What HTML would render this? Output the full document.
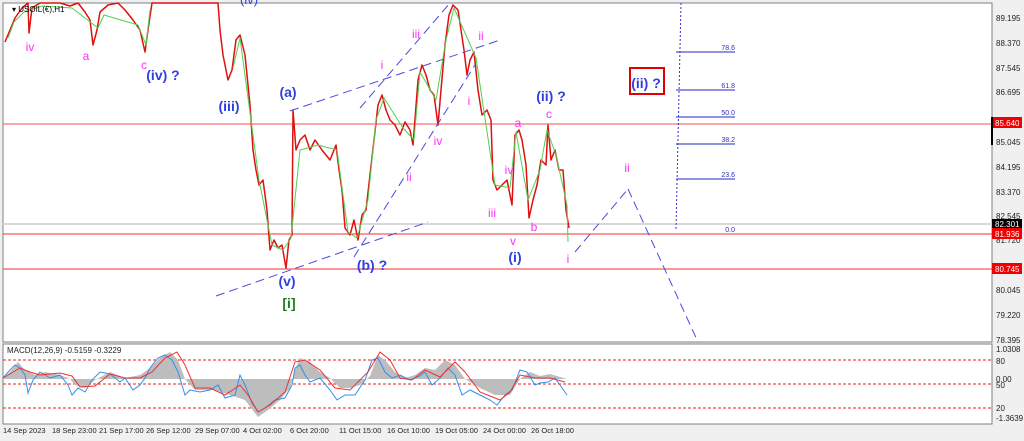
<!DOCTYPE html>
<html><head><meta charset="utf-8"><style>
body{margin:0;background:#f0f0f0;width:1024px;height:441px;overflow:hidden;font-family:"Liberation Sans",sans-serif}
svg{display:block}
</style></head><body>
<svg width="1024" height="441" viewBox="0 0 1024 441" xmlns="http://www.w3.org/2000/svg" font-family="Liberation Sans, sans-serif">
<rect x="0" y="0" width="1024" height="441" fill="#f0f0f0"/>
<rect x="3" y="3" width="989" height="339" fill="#fff" stroke="#808080"/>
<rect x="3" y="344" width="989" height="80" fill="#fff" stroke="#808080"/>
<line x1="3" y1="224" x2="992" y2="224" stroke="#d8d8d8" stroke-width="2"/>
<line x1="3" y1="124" x2="992" y2="124" stroke="#f25050" stroke-width="1"/>
<line x1="3" y1="234" x2="992" y2="234" stroke="#f03030" stroke-width="1"/>
<line x1="3" y1="269" x2="992" y2="269" stroke="#f03030" stroke-width="1"/>
<g fill="none" stroke-linejoin="round">
<polyline stroke="#e01010" stroke-width="1.5" points="5,42 10,30 15,18 22,8 28,3 29,33 32,8 40,3 60,3 70,6 78,3 85,12 90,20 93,45 97,30 100,12 108,5 118,3 125,10 133,20 140,30 145,52 148,30 152,3 218,3 220,30 223,55 228,80 232,70 236,40 240,35 245,55 250,105 253,150 256,170 259,185 263,180 267,210 270,250 274,240 278,248 282,245 286,268 289,240 292,235 293,110 296,150 300,140 305,135 310,150 315,140 322,150 330,160 336,145 339,170 342,190 345,228 350,235 354,220 358,240 362,215 366,210 370,175 374,140 378,105 382,95 386,110 390,120 395,125 400,135 405,122 410,130 413,145 418,80 422,65 426,75 430,90 434,95 438,125 441,90 445,45 449,15 453,5 458,10 461,30 464,50 467,75 470,60 474,52 478,90 482,115 487,110 491,120 493,180 497,190 502,185 507,180 512,205 515,135 519,130 522,140 526,165 529,218 533,200 537,185 541,160 546,165 548,125 551,160 555,150 559,170 563,170 566,210 569,228"/>
<polyline stroke="#50d050" stroke-width="1" points="8,38 14,22 24,12 42,6 72,8 98,28 104,15 138,25 146,45 150,10"/>
<polyline stroke="#50d050" stroke-width="1" points="233,68 240,38 259,180 272,245 283,250 291,238 300,150 318,145 337,150 348,232 357,238 368,200 376,120 384,98 403,128 414,140 420,72 436,100 446,40 454,8 476,58 495,185 510,188 516,132 528,200 540,170 547,130 556,155 567,205 568,242"/>
</g>
<g stroke="#4a4ae0" stroke-width="1" stroke-dasharray="9,5" fill="none">
<line x1="216" y1="296" x2="428" y2="222"/>
<line x1="290" y1="111" x2="500" y2="40"/>
<line x1="354" y1="257" x2="475" y2="65"/>
<line x1="360" y1="108" x2="450" y2="3"/>
<line x1="575" y1="252" x2="628" y2="189"/>
<line x1="628" y1="189" x2="698" y2="342"/>
</g>
<line x1="681" y1="3" x2="676" y2="229" stroke="#3030d0" stroke-dasharray="2,2"/>
<g stroke="#5050d0" stroke-width="1.2">
<line x1="676" y1="52" x2="735" y2="52"/><line x1="676" y1="90" x2="735" y2="90"/>
<line x1="676" y1="117" x2="735" y2="117"/><line x1="676" y1="144" x2="735" y2="144"/>
<line x1="676" y1="179" x2="735" y2="179"/>
</g>
<g font-size="7" fill="#3030b0" text-anchor="end">
<text x="735" y="50">78.6</text><text x="735" y="88">61.8</text><text x="735" y="115">50.0</text>
<text x="735" y="142">38.2</text><text x="735" y="177">23.6</text><text x="735" y="232">0.0</text>
</g>
<g font-size="12" fill="#ff30ff" text-anchor="middle">
<text x="30" y="51">iv</text><text x="86" y="60">a</text><text x="144" y="69">c</text>
<text x="382" y="69">i</text><text x="416" y="38">iii</text><text x="481" y="40">ii</text>
<text x="469" y="105">i</text><text x="438" y="145">iv</text><text x="409" y="181">ii</text>
<text x="509" y="174">iv</text><text x="492" y="217">iii</text><text x="513" y="245">v</text>
<text x="518" y="127">a</text><text x="534" y="231">b</text><text x="549" y="118">c</text>
<text x="568" y="263">i</text><text x="627" y="172">ii</text>
</g>
<g font-size="14" fill="#3040e0" text-anchor="middle" font-weight="bold">
<text x="163" y="80">(iv) ?</text><text x="229" y="111">(iii)</text><text x="288" y="97">(a)</text>
<text x="287" y="286">(v)</text><text x="372" y="270">(b) ?</text><text x="515" y="262">(i)</text>
<text x="551" y="101">(ii) ?</text><text x="646" y="88">(ii) ?</text>
</g>
<rect x="630" y="68" width="34" height="26" fill="none" stroke="#e00000" stroke-width="2"/>
<text x="289" y="308" font-size="14" fill="#208020" text-anchor="middle" font-weight="bold">[i]</text>
<text x="240" y="4" font-size="13" fill="#3040e0">(iv)</text>
<text x="12" y="12" font-size="8" fill="#000">▾ USOIL(€),H1</text>
<g font-size="8" fill="#222">
<text x="996" y="21">89.195</text><text x="996" y="46">88.370</text><text x="996" y="71">87.545</text>
<text x="996" y="95">86.695</text><text x="996" y="145">85.045</text><text x="996" y="170">84.195</text>
<text x="996" y="195">83.370</text><text x="996" y="219">82.545</text><text x="996" y="243">81.720</text>
<text x="996" y="293">80.045</text><text x="996" y="318">79.220</text><text x="996" y="343">78.395</text>
</g>
<rect x="992" y="117" width="30" height="11" fill="#f00000"/><text x="995" y="126" font-size="8" fill="#fff">85.640</text>
<rect x="992" y="219" width="30" height="11" fill="#000"/><text x="995" y="227" font-size="8" fill="#fff">82.301</text>
<rect x="992" y="228" width="30" height="11" fill="#f00000"/><text x="995" y="237" font-size="8" fill="#fff">81.936</text>
<rect x="992" y="263" width="30" height="11" fill="#f00000"/><text x="995" y="272" font-size="8" fill="#fff">80.745</text>
<rect x="991" y="117" width="2" height="28" fill="#000"/>
<g stroke="#f02020" stroke-dasharray="3,2" stroke-width="1">
<line x1="3" y1="360" x2="992" y2="360"/><line x1="3" y1="384" x2="992" y2="384"/><line x1="3" y1="408" x2="992" y2="408"/>
</g>
<path fill="#bdbdbd" d="M3,379 L10,372 L18,362 L25,370 L35,375 L45,372 L60,375 L70,379 L75,385 L85,388 L95,380 L110,372 L125,378 L140,375 L150,368 L160,358 L170,352 L178,360 L185,379 L195,390 L215,390 L230,395 L245,400 L258,417 L268,410 L280,400 L290,388 L295,370 L300,358 L310,362 L320,372 L330,378 L340,388 L350,388 L360,385 L370,376 L378,355 L385,360 L395,372 L405,378 L415,375 L425,368 L435,370 L445,360 L455,365 L465,379 L480,388 L495,395 L510,395 L520,379 L530,372 L540,376 L550,374 L567,379 Z"/>
<polyline fill="none" stroke="#3090f0" stroke-width="1" points="3,378 10,370 15,365 20,368 25,375 28,393 33,380 40,372 50,378 60,375 68,385 72,395 78,388 85,392 92,380 100,372 110,374 115,378 120,382 125,378 133,390 140,385 145,378 150,368 158,358 165,355 172,360 178,372 185,395 190,390 200,392 210,390 218,385 225,398 235,395 240,375 245,385 252,403 258,412 265,408 275,400 285,398 292,385 295,368 300,365 305,375 310,382 320,378 330,390 337,400 345,395 355,395 365,380 372,360 378,358 385,372 392,378 400,375 410,380 420,376 425,372 432,385 440,378 448,368 455,375 462,395 470,390 480,395 490,400 497,405 505,395 512,390 520,370 527,372 535,385 540,383 548,382 555,378 560,385 567,395"/>
<polyline fill="none" stroke="#f03030" stroke-width="1" points="3,378 20,368 30,372 40,375 60,373 72,376 80,387 95,386 110,374 125,378 140,378 152,372 165,358 177,352 185,365 195,388 210,388 225,395 240,385 248,395 258,412 270,405 285,392 295,362 305,360 320,370 335,388 350,390 368,372 380,352 390,360 400,378 412,380 425,370 440,377 455,362 465,372 480,392 500,400 510,392 520,375 535,378 550,378 565,382"/>
<text x="7" y="353" font-size="8" fill="#222">MACD(12,26,9) -0.5159 -0.3229</text>
<g font-size="8" fill="#222">
<text x="996" y="352">1.0308</text><text x="996" y="364">80</text><text x="996" y="382">0.00</text><text x="996" y="388">50</text>
<text x="996" y="411">20</text><text x="996" y="421">-1.3639</text>
</g>
<g font-size="7.5" fill="#222">
<text x="3" y="433">14 Sep 2023</text><text x="52" y="433">18 Sep 23:00</text><text x="99" y="433">21 Sep 17:00</text>
<text x="146" y="433">26 Sep 12:00</text><text x="195" y="433">29 Sep 07:00</text><text x="243" y="433">4 Oct 02:00</text>
<text x="290" y="433">6 Oct 20:00</text><text x="339" y="433">11 Oct 15:00</text><text x="387" y="433">16 Oct 10:00</text>
<text x="435" y="433">19 Oct 05:00</text><text x="483" y="433">24 Oct 00:00</text><text x="531" y="433">26 Oct 18:00</text>
</g>
</svg>
</body></html>
